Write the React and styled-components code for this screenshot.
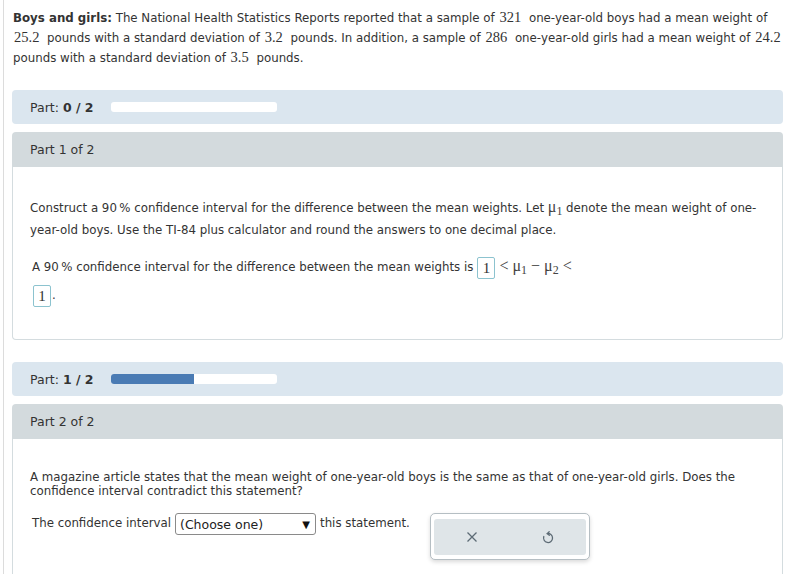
import styled, { createGlobalStyle } from 'styled-components';

const GlobalStyle = createGlobalStyle`
    body {
        margin: 0;
        background: #fff;
        font-family: "DejaVu Sans", Verdana, sans-serif;
        font-size: 11.8px;
        color: #333;
    }
`;

const Page = styled.div`
    margin-left: 3px;
    border-left: 1px solid #dcdcdc;
    padding: 8px 7px 40px 8px;
    min-height: 560px;
`;

const Intro = styled.p`
    margin: 0 0 0 1px;
    line-height: 20px;
    white-space: nowrap;
`;

const Num = styled.span`
    font-family: "Liberation Serif", "Times New Roman", serif;
    font-size: 14.5px;
    line-height: 14px;
    margin: 0 4px 0 1px;
`;

const PartBar = styled.div`
    display: flex;
    align-items: center;
    height: 34px;
    margin-top: 22px;
    padding-left: 18px;
    background: #dbe6ef;
    border-radius: 4px;
`;

const PartLabel = styled.span`
    width: 81px;
    font-size: 12.5px;

    b { font-weight: bold; }
`;

const Progress = styled.div`
    width: 166px;
    height: 10px;
    background: #fff;
    border-radius: 3px;
    overflow: hidden;
`;

const ProgressFill = styled.div`
    height: 100%;
    background: #4a7bb4;
`;

const PartHeader = styled.div`
    display: flex;
    align-items: center;
    height: 35px;
    margin-top: 8px;
    padding-left: 18px;
    background: #d3dadd;
    border-radius: 4px 4px 0 0;
    font-size: 12.5px;
`;

const PartBody = styled.div`
    border: 1px solid #d4dcdf;
    border-top: none;
    border-radius: 0 0 4px 4px;
    padding: ${(p) => p.$pad || '30px 17px 0'};
    height: ${(p) => p.$height}px;
    box-sizing: border-box;
`;

const Text = styled.p`
    margin: 0;
    line-height: ${(p) => p.$lh || 22}px;
    white-space: nowrap;
`;

const AnswerLine = styled.p`
    margin: 12px 0 0 2px;
    line-height: 28px;
    white-space: nowrap;
`;

const AnswerBox = styled.span`
    display: inline-block;
    vertical-align: middle;
    box-sizing: border-box;
    height: 22px;
    min-width: 18px;
    padding: 0 4px;
    line-height: 20px;
    border: 1px solid #8cc3cf;
    border-radius: 2px;
    font-family: "Liberation Serif", "Times New Roman", serif;
    font-size: 15px;
    text-align: center;
    margin: ${(p) => p.$margin || '0 4px 0 4px'};
    color: #333;
`;

const Math = styled.span`
    font-family: "Liberation Serif", "Times New Roman", serif;
    font-size: 16px;
    line-height: 14px;
    color: #444;

    sub {
        font-size: 12px;
        vertical-align: -3px;
        line-height: 0;
    }
`;

const Row = styled.div`
    display: flex;
    align-items: flex-start;
    margin: 15px 0 0 2px;
`;

const RowText = styled.span`
    line-height: 21px;
    white-space: nowrap;
`;

const Select = styled.div`
    display: flex;
    align-items: center;
    justify-content: space-between;
    box-sizing: border-box;
    width: 141px;
    height: 22px;
    margin: 0 4px 0 4px;
    padding: 1px 5px 0 4px;
    border: 1px solid #8a8a8a;
    border-radius: 3px;
    font-size: 12.5px;
    color: #222;
`;

const Caret = styled.span`
    font-size: 10px;
    color: #111;
`;

const ActionBox = styled.div`
    margin-left: 20px;
    width: 160px;
    height: 47px;
    box-sizing: border-box;
    padding: 5px 3px 0;
    border: 1px solid #b5bec3;
    border-radius: 5px;
    background: #fff;
    box-shadow: 0 2px 4px rgba(0, 0, 0, 0.15);
`;

const ActionInner = styled.div`
    display: flex;
    height: 36px;
    background: #dfe5e8;
    border-radius: 3px;
`;

const ActionButton = styled.div`
    flex: 1;
    display: flex;
    align-items: center;
    justify-content: center;
    color: #5d6b75;
`;

const CloseIcon = () => (
    <svg width="12" height="12" viewBox="0 0 12 12" fill="none" stroke="currentColor" strokeWidth="1.3">
        <path d="M1.5 1.5 L10.5 10.5 M10.5 1.5 L1.5 10.5" />
    </svg>
);

const UndoIcon = () => (
    <svg width="14" height="14" viewBox="0 0 14 14" fill="none" stroke="currentColor" strokeWidth="1.3" strokeLinecap="round" strokeLinejoin="round">
        <path d="M6.2 3.6 A4.5 4.5 0 1 1 2.8 6.5" />
        <path d="M8.2 1.7 L6.2 3.6 L8.3 5.3" />
    </svg>
);

const App = () => {
    return (
        <>
            <GlobalStyle />
            <Page>
                <Intro>
                    <b>Boys and girls:</b> The National Health Statistics Reports reported that a sample of <Num>321</Num> one-year-old boys had a mean weight of
                    <br />
                    <Num>25.2</Num> pounds with a standard deviation of <Num>3.2</Num> pounds. In addition, a sample of <Num>286</Num> one-year-old girls had a mean weight of <Num>24.2</Num>
                    <br />
                    pounds with a standard deviation of <Num>3.5</Num> pounds.
                </Intro>

                <PartBar>
                    <PartLabel>Part: <b>0 / 2</b></PartLabel>
                    <Progress><ProgressFill style={{ width: '0%' }} /></Progress>
                </PartBar>
                <PartHeader>Part 1 of 2</PartHeader>
                <PartBody $height={173}>
                    <Text>
                        Construct a 90&#8201;% confidence interval for the difference between the mean weights. Let <Math>μ<sub>1</sub></Math> denote the mean weight of one-
                        <br />
                        year-old boys. Use the TI-84 plus calculator and round the answers to one decimal place.
                    </Text>
                    <AnswerLine>
                        A 90&#8201;% confidence interval for the difference between the mean weights is<AnswerBox>1</AnswerBox>
                        <Math>&lt; μ<sub>1</sub> − μ<sub>2</sub> &lt;</Math>
                        <br />
                        <AnswerBox $margin="0 1px 0 1px">1</AnswerBox>.
                    </AnswerLine>
                </PartBody>

                <PartBar>
                    <PartLabel>Part: <b>1 / 2</b></PartLabel>
                    <Progress><ProgressFill style={{ width: '50%' }} /></Progress>
                </PartBar>
                <PartHeader>Part 2 of 2</PartHeader>
                <PartBody $height={160} $pad="31px 17px 0">
                    <Text $lh={14}>
                        A magazine article states that the mean weight of one-year-old boys is the same as that of one-year-old girls. Does the
                        <br />
                        confidence interval contradict this statement?
                    </Text>
                    <Row>
                        <RowText>The confidence interval</RowText>
                        <Select>
                            <span>(Choose one)</span>
                            <Caret>▼</Caret>
                        </Select>
                        <RowText>this statement.</RowText>
                        <ActionBox>
                            <ActionInner>
                                <ActionButton><CloseIcon /></ActionButton>
                                <ActionButton><UndoIcon /></ActionButton>
                            </ActionInner>
                        </ActionBox>
                    </Row>
                </PartBody>
            </Page>
        </>
    );
};

export default App;
